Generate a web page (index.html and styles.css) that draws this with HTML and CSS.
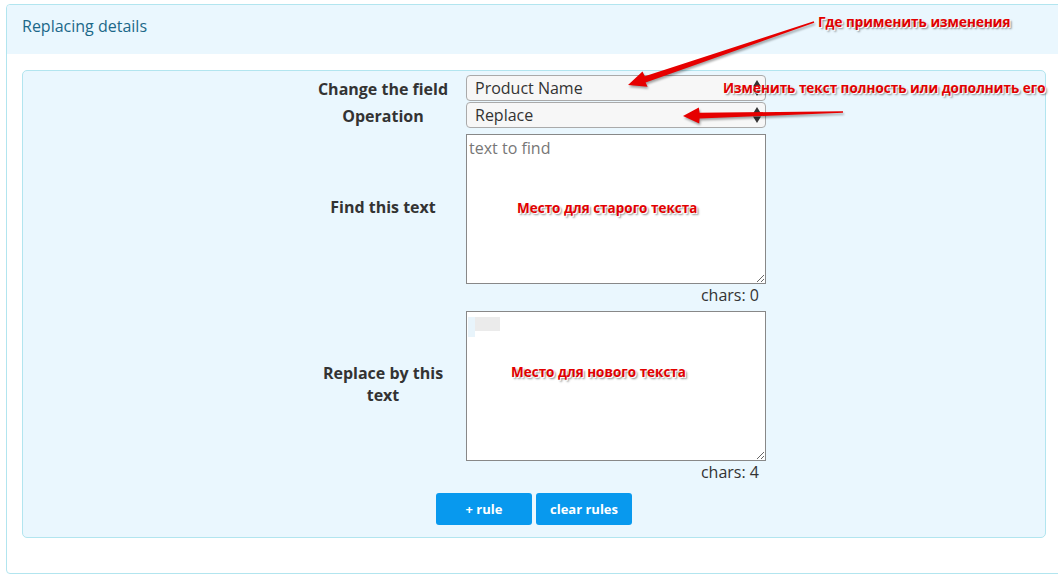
FILE: index.html
```html
<html>
  <head>
    <title>Replacing details</title>
    <meta charset="utf-8">
    <link rel="stylesheet" href="styles.css">
  </head>
  <body>
  <div class="page">
      <div class="panel">
          <div class="panel-head">Replacing details</div>
          <div class="panel-body">
              <div class="rules-box">
                  <div class="form">
                      <div class="label">Change the field</div>
                      <div class="field">
                          <select class="pick">
                              <option>Product Name</option>
                          </select>
                          <svg class="updown" width="8" height="16" viewBox="0 0 8 16"><path d="M4 0 L8 6.5 L0 6.5 Z M4 16 L8 9.5 L0 9.5 Z" fill="#333"/></svg>
                      </div>

                      <div class="label">Operation</div>
                      <div class="field">
                          <select class="pick">
                              <option>Replace</option>
                          </select>
                          <svg class="updown" width="8" height="16" viewBox="0 0 8 16"><path d="M4 0 L8 6.5 L0 6.5 Z M4 16 L8 9.5 L0 9.5 Z" fill="#333"/></svg>
                      </div>

                      <div class="label label-big">Find this text</div>
                      <div class="field field-text">
                          <textarea class="text" placeholder="text to find"></textarea>
                      </div>
                      <div></div>
                      <div class="chars">chars: 0</div>

                      <div class="label label-big">Replace by this<br>text</div>
                      <div class="field field-text">
                          <textarea class="text"></textarea>
                          <span class="blur blur-a"></span>
                          <span class="blur blur-b"></span>
                      </div>
                      <div></div>
                      <div class="chars">chars: 4</div>
                  </div>
                  <div class="buttons">
                      <button class="btn">+ rule</button>
                      <button class="btn">clear rules</button>
                  </div>
              </div>
          </div>
      </div>
  </div>

  <!-- annotations drawn over the screenshot -->
  <div class="notes">
      <svg class="arrows" width="1058" height="582" viewBox="0 0 1058 582">
          <polygon fill="#e60000" points="628,85 642.5,71.6 644.8,76.2 813.8,21.3 814.2,22.7 645.6,82.4 647.6,86.8"/>
          <polygon fill="#e60000" points="683,116 698.8,107.6 699.6,112.8 843,111.2 843,112.8 699.6,118.6 699.2,123.6"/>
      </svg>
      <div class="note note-1">Где применить изменения</div>
      <div class="note note-2">Изменить текст полность или дополнить его</div>
      <div class="note note-3">Место для старого текста</div>
      <div class="note note-4">Место для нового текста</div>
  </div>
  </body>
</html>
```

FILE: styles.css
```css
html {
    overflow: hidden;
}

body {
    margin: 0;
    position: relative;
    font-family: "Open Sans", "Liberation Sans", sans-serif;
    color: #333;
    background: #fff;
}

.page {
    padding: 4px 0 0 6px;
}

.panel {
    width: 1054px;
    border: 1px solid #b2e5ef;
    border-radius: 4px;
}

.panel-head {
    height: 49px;
    line-height: 43px;
    padding-left: 15px;
    background-color: #eaf7fe;
    color: #1b6889;
    font-size: 16px;
    border-radius: 4px 4px 0 0;
}

.panel-body {
    padding: 16px 15px 35px 15px;
}

.rules-box {
    background-color: #eaf7fe;
    border: 1px solid #b2e5ef;
    border-radius: 5px;
    padding: 4px 0 12px 0;
}

.form {
    display: grid;
    grid-template-columns: 164px 300px;
    justify-content: center;
}

.label {
    align-self: center;
    text-align: center;
    font-weight: 700;
    font-size: 16px;
    line-height: 22px;
    padding-right: 2px;
}

.label-big {
    margin-top: 1px;
}

.field {
    position: relative;
    margin-bottom: 1px;
}

.field-text {
    margin-top: 5px;
    margin-bottom: 0;
    height: 150px;
}

.pick {
    -webkit-appearance: none;
    appearance: none;
    display: block;
    width: 300px;
    height: 26px;
    margin: 0;
    padding: 0 0 0 8px;
    border: 1px solid #aaa;
    border-radius: 4px;
    background-color: #f7f7f7;
    font-family: "Open Sans", "Liberation Sans", sans-serif;
    font-size: 16px;
    color: #333;
}

.updown {
    position: absolute;
    right: 5px;
    top: 5px;
}

.text {
    display: block;
    box-sizing: border-box;
    width: 300px;
    height: 150px;
    margin: 0;
    padding: 2px;
    border: 1px solid #888;
    background: #fff;
    font-family: "Open Sans", "Liberation Sans", sans-serif;
    font-size: 16px;
    line-height: 22px;
    color: #333;
}

.text::placeholder {
    color: #777;
}

.blur {
    position: absolute;
}

.blur-a {
    left: 2px;
    top: 6px;
    width: 7px;
    height: 20px;
    background: #e8f4fb;
}

.blur-b {
    left: 9px;
    top: 6px;
    width: 25px;
    height: 14px;
    background: #ebebeb;
}

.chars {
    text-align: right;
    padding-right: 7px;
    font-size: 16px;
    line-height: 22px;
}

.buttons {
    display: flex;
    justify-content: center;
    gap: 4px;
    margin-top: 10px;
}

.btn {
    width: 96px;
    height: 32px;
    border: 0;
    border-radius: 3px;
    background-color: #0899ee;
    color: #fff;
    font-family: "Open Sans", "Liberation Sans", sans-serif;
    font-weight: 700;
    font-size: 13px;
}

.notes {
    position: absolute;
    left: 0;
    top: 0;
    width: 1058px;
    height: 582px;
    pointer-events: none;
}

.arrows {
    position: absolute;
    left: 0;
    top: 0;
    filter: drop-shadow(1px 2px 1px rgba(0, 0, 0, 0.35));
}

.note {
    position: absolute;
    color: #e30000;
    font-weight: 700;
    font-size: 13.5px;
    line-height: 18px;
    white-space: nowrap;
    text-shadow: 1px 1px 0 #fff, 2px 2px 2px rgba(0, 0, 0, 0.45);
}

.note-1 {
    left: 818px;
    top: 13px;
}

.note-2 {
    left: 723px;
    top: 79px;
}

.note-3 {
    left: 517px;
    top: 199px;
}

.note-4 {
    left: 511px;
    top: 363px;
}
```
